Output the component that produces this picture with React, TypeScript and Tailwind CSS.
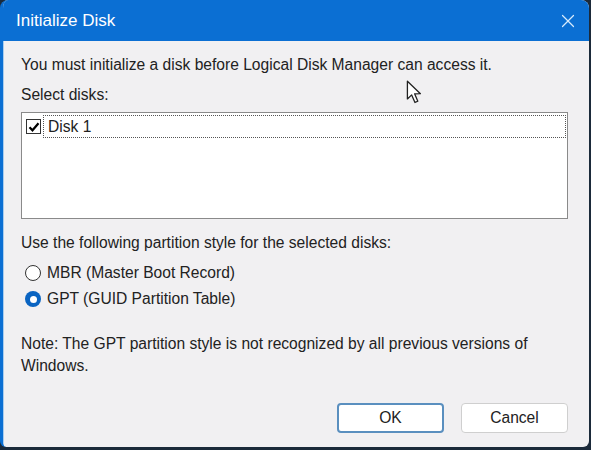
import { X } from "lucide-react";

const Radio = ({ checked }: { checked: boolean }) => {
  if (checked) {
    return (
      <span className="flex h-4 w-4 items-center justify-center rounded-full bg-[#0a64c2]">
        <span className="h-[7px] w-[7px] rounded-full bg-white" />
      </span>
    );
  }
  return <span className="h-4 w-4 rounded-full border border-[#333] bg-white" />;
};

const App = () => {
  return (
    <div className="h-[450px] w-[591px] overflow-hidden bg-[#1b2a3a] font-['Liberation_Sans',Arial,sans-serif] text-[15.6px] text-[#222]">
      <div className="relative flex h-[447px] w-[589px] flex-col overflow-hidden rounded-t-[8px] rounded-b-[6px] border-l-[3px] border-[#0b6fd3] bg-[#f1f0f2]">
        {/* title bar */}
        <div className="flex h-[41px] shrink-0 items-center justify-between bg-[#0b6fd3] pl-[13px] pr-[10px] text-white">
          <span className="text-[17px]">Initialize Disk</span>
          <X className="h-[22px] w-[22px]" strokeWidth={1.3} color="#d6eafc" />
        </div>

        <div className="flex flex-1 flex-col border-l border-[#a9cdee] pl-[17px] pr-[21px]">
          <p className="mt-[15px] leading-[18px]">
            You must initialize a disk before Logical Disk Manager can access it.
          </p>
          <p className="mt-[12px] leading-[18px]">Select disks:</p>

          <div className="mt-[8px] h-[107px] border border-[#8a8a8a] bg-white p-[1px]">
            <div className="flex items-center gap-[2px] pl-[3px] pt-[1px]">
              <span className="flex h-[15px] w-[15px] items-center justify-center border border-[#333] bg-white">
                <svg viewBox="0 0 12 12" className="h-[12px] w-[12px]">
                  <path d="M1.5 6.2 L4.5 9.3 L10.5 2.3" fill="none" stroke="#000" strokeWidth="2.2" />
                </svg>
              </span>
              <div className="flex-1 border border-dotted border-[#555] py-[2px] pl-[4px] leading-[17px]">
                Disk 1
              </div>
            </div>
          </div>

          <p className="mt-[15px] leading-[18px]">
            Use the following partition style for the selected disks:
          </p>
          <div className="mt-[12px] flex flex-col gap-[8px] pl-[4px]">
            <label className="flex items-center gap-[6px] leading-[18px]">
              <Radio checked={false} />
              MBR (Master Boot Record)
            </label>
            <label className="flex items-center gap-[6px] leading-[18px]">
              <Radio checked={true} />
              GPT (GUID Partition Table)
            </label>
          </div>

          <p className="mt-[25px] leading-[22px]">
            Note: The GPT partition style is not recognized by all previous versions of
            <br />
            Windows.
          </p>

          <div className="mt-[26px] flex justify-end gap-[17px]">
            <button className="h-[30px] w-[107px] rounded-[4px] border-2 border-[#5a8fbf] bg-white">
              OK
            </button>
            <button className="h-[30px] w-[107px] rounded-[4px] border border-[#cfcfcf] bg-white">
              Cancel
            </button>
          </div>
        </div>

        {/* mouse pointer */}
        <svg
          viewBox="0 0 14 22"
          className="absolute left-[403px] top-[80px] h-[26px] w-[17px]"
        >
          <path
            d="M1 1 L1 16 L4.6 12.6 L7.4 19 L9.8 18 L7.1 11.7 L12 11.6 Z"
            fill="#fff"
            stroke="#222"
            strokeWidth="1.1"
            strokeLinejoin="round"
          />
        </svg>
      </div>
    </div>
  );
};

export default App;
